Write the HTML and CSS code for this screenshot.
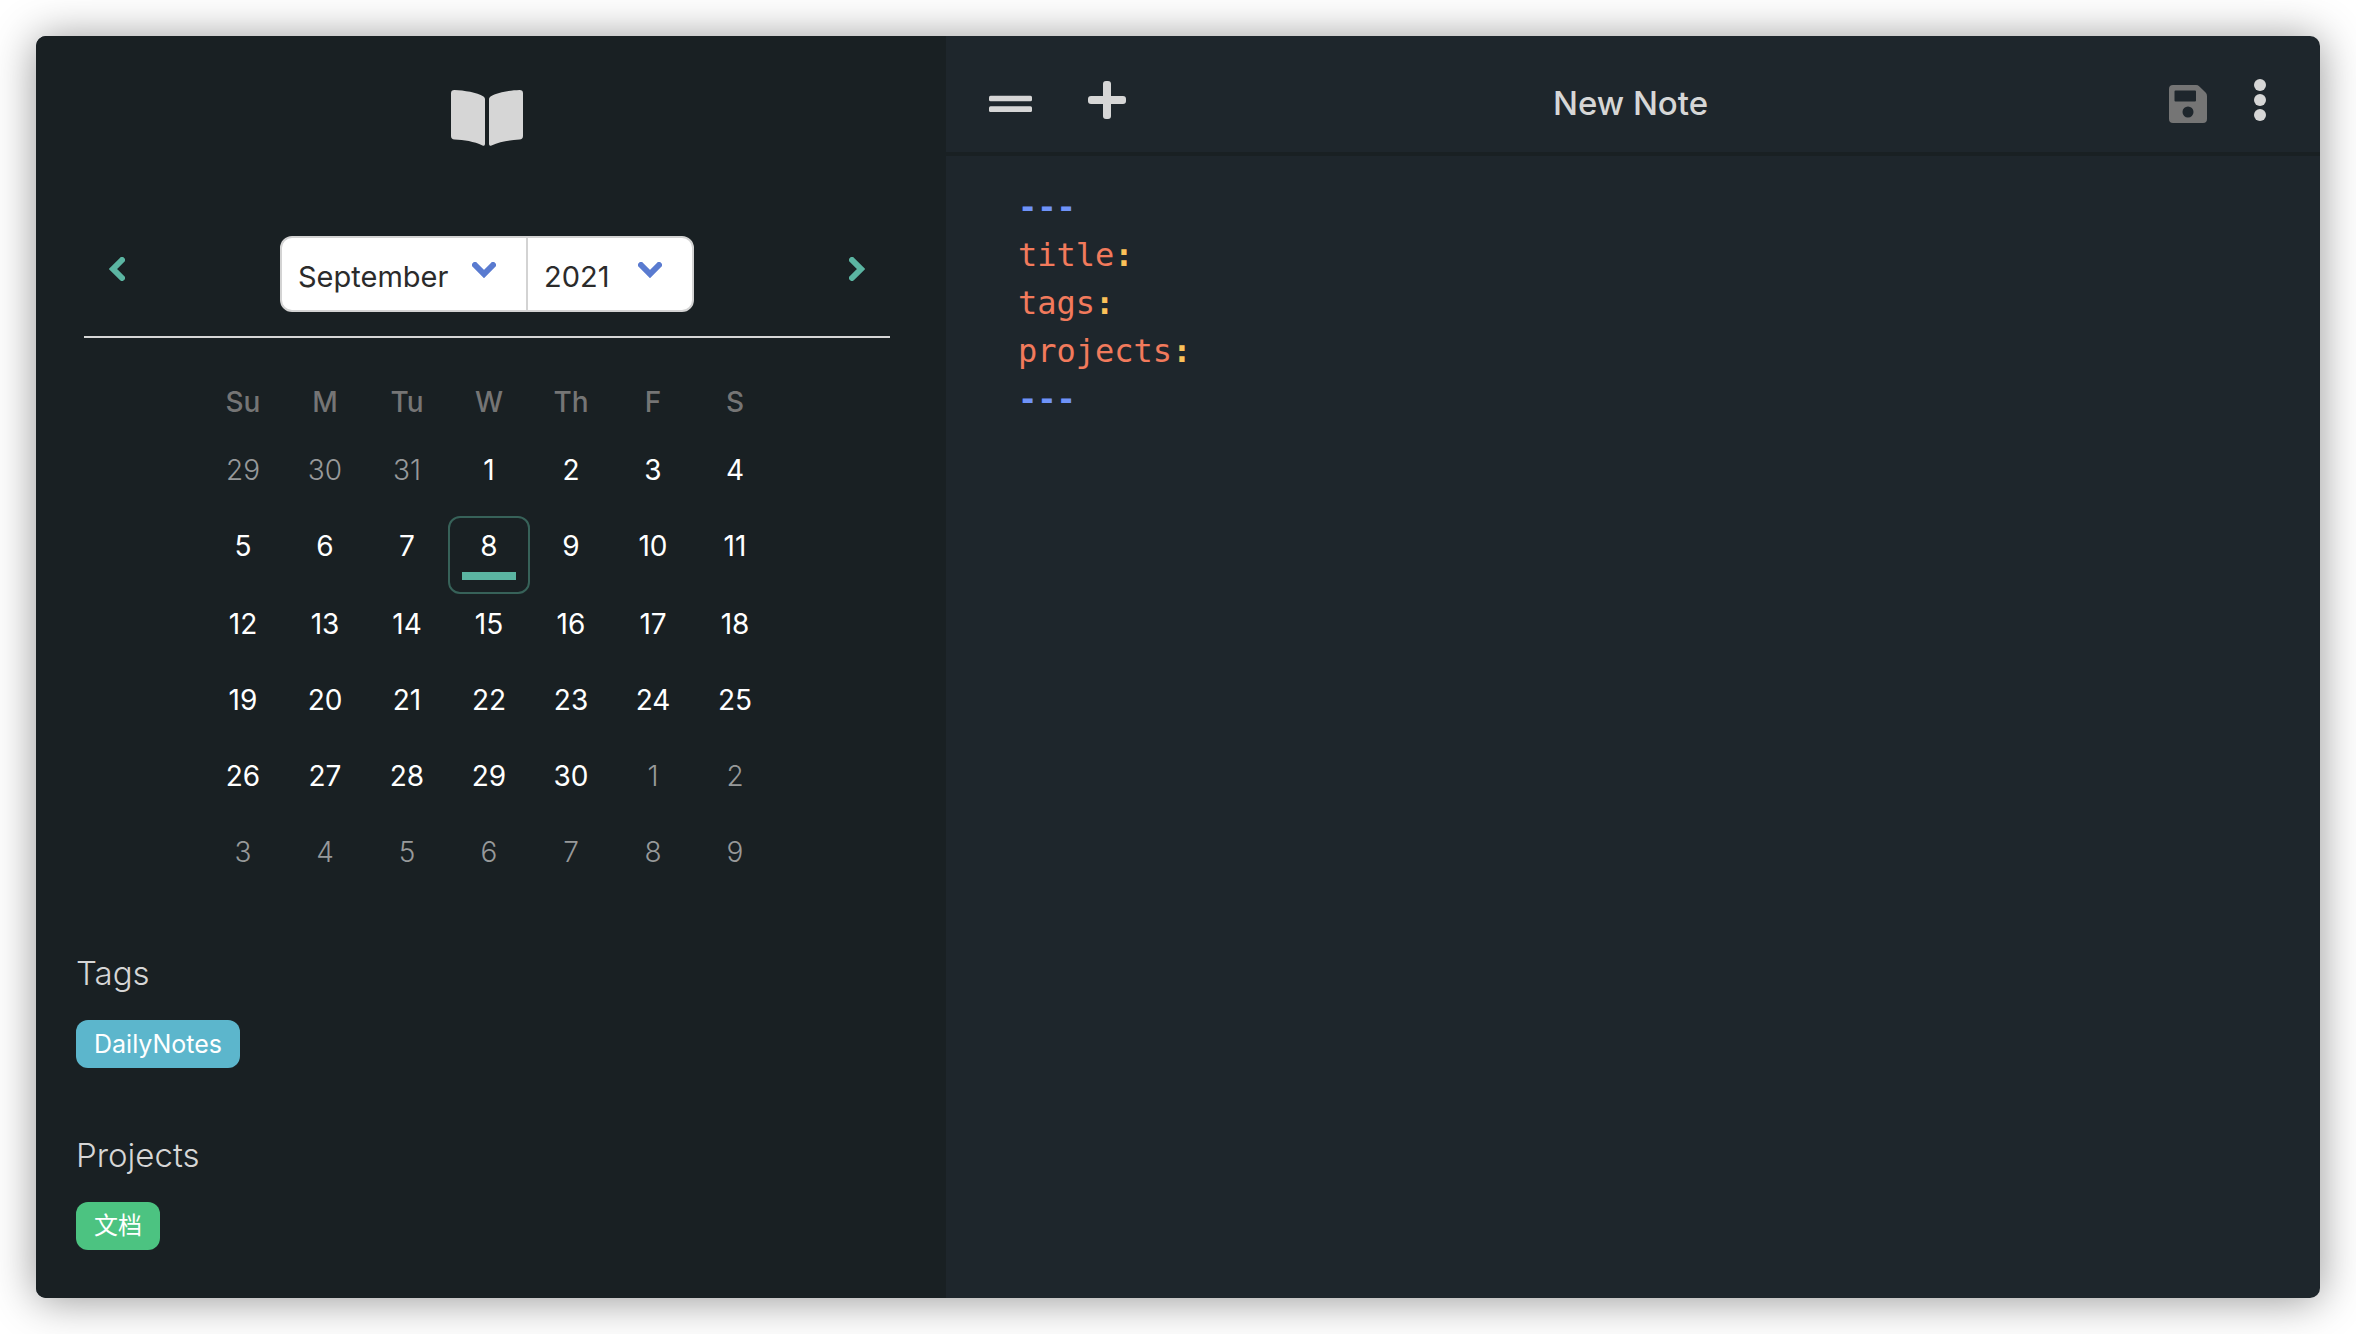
FILE: index.html
```
<!DOCTYPE html>
<html lang="en">
<head>
<meta charset="utf-8">
<meta name="viewport" content="width=device-width, initial-scale=1">
<title>New Note</title>
<link rel="stylesheet" href="styles.css">
</head>
<body>
<div class="window">
  <aside class="sidebar">
    <a class="logo" href="#" aria-label="Home">
      <svg width="72" height="56" viewBox="0 0 72 56" fill="currentColor"><path d="M3.500 0C13 .3 26 2.500 32.500 6.500Q34 7.500 34 9V54Q34 56.500 31.500 55.500C23 51.500 13 50 3.500 49.600Q0 49.400 0 46V3.300Q0 0 3.500 0ZM68.500 0C59 .3 46 2.500 39.500 6.500Q38 7.500 38 9V54Q38 56.500 40.500 55.500C49 51.500 59 50 68.500 49.600Q72 49.400 72 46V3.300Q72 0 68.500 0Z"/></svg>
    </a>

    <div class="month-nav">
      <button class="arrow" type="button" aria-label="Previous month">
        <svg width="16" height="24" viewBox="0 0 16 24"><path d="M13 3 4 12l9 9"/></svg>
      </button>
      <div class="pickers">
        <div class="picker picker-month">
          <select aria-label="Month"><option>September</option></select>
          <svg class="caret" width="24" height="16" viewBox="0 0 24 16"><path d="m3 3 9 9 9-9"/></svg>
        </div>
        <div class="picker picker-year">
          <select aria-label="Year"><option>2021</option></select>
          <svg class="caret" width="24" height="16" viewBox="0 0 24 16"><path d="m3 3 9 9 9-9"/></svg>
        </div>
      </div>
      <button class="arrow" type="button" aria-label="Next month">
        <svg width="16" height="24" viewBox="0 0 16 24"><path d="m3 3 9 9-9 9"/></svg>
      </button>
    </div>

    <table class="calendar">
      <thead>
        <tr><th>Su</th><th>M</th><th>Tu</th><th>W</th><th>Th</th><th>F</th><th>S</th></tr>
      </thead>
      <tbody>
        <tr><td><button class="day muted">29</button></td><td><button class="day muted">30</button></td><td><button class="day muted">31</button></td><td><button class="day">1</button></td><td><button class="day">2</button></td><td><button class="day">3</button></td><td><button class="day">4</button></td></tr>
        <tr><td><button class="day">5</button></td><td><button class="day">6</button></td><td><button class="day">7</button></td><td><button class="day today">8</button></td><td><button class="day">9</button></td><td><button class="day">10</button></td><td><button class="day">11</button></td></tr>
        <tr><td><button class="day">12</button></td><td><button class="day">13</button></td><td><button class="day">14</button></td><td><button class="day">15</button></td><td><button class="day">16</button></td><td><button class="day">17</button></td><td><button class="day">18</button></td></tr>
        <tr><td><button class="day">19</button></td><td><button class="day">20</button></td><td><button class="day">21</button></td><td><button class="day">22</button></td><td><button class="day">23</button></td><td><button class="day">24</button></td><td><button class="day">25</button></td></tr>
        <tr><td><button class="day">26</button></td><td><button class="day">27</button></td><td><button class="day">28</button></td><td><button class="day">29</button></td><td><button class="day">30</button></td><td><button class="day muted">1</button></td><td><button class="day muted">2</button></td></tr>
        <tr><td><button class="day muted">3</button></td><td><button class="day muted">4</button></td><td><button class="day muted">5</button></td><td><button class="day muted">6</button></td><td><button class="day muted">7</button></td><td><button class="day muted">8</button></td><td><button class="day muted">9</button></td></tr>
      </tbody>
    </table>

    <section class="group">
      <h2>Tags</h2>
      <a class="badge badge-tag" href="#">DailyNotes</a>
    </section>
    <section class="group">
      <h2>Projects</h2>
      <a class="badge badge-project" href="#" lang="zh">文档</a>
    </section>
  </aside>

  <main class="note">
    <header class="toolbar">
      <div class="tools">
        <button class="tool" type="button" aria-label="Toggle sidebar">
          <svg width="43" height="46" viewBox="0 0 43 46" fill="currentColor"><rect x="0" y="18.700" width="43" height="5.600" rx="1.500"/><rect x="0" y="29.300" width="43" height="5.600" rx="1.500"/></svg>
        </button>
        <button class="tool" type="button" aria-label="New note">
          <svg width="38" height="46" viewBox="0 0 38 46" fill="currentColor"><rect x="0" y="19" width="38" height="8" rx="3"/><rect x="15" y="4" width="8" height="38" rx="3"/></svg>
        </button>
      </div>
      <h1>New Note</h1>
      <div class="tools tools-end">
        <button class="tool tool-off" type="button" aria-label="Save">
          <svg width="38" height="38" viewBox="0 0 38 38" fill="currentColor" fill-rule="evenodd"><path d="M4 0H27Q29 0 30.400 1.400L36.600 7.600Q38 9 38 11V34Q38 38 34 38H4Q0 38 0 34V4Q0 0 4 0ZM6.500 5.500Q5.500 5.500 5.500 6.500V15.500Q5.500 16.500 6.500 16.500H26Q27 16.500 27 15.500V6.500Q27 5.500 26 5.500ZM19 21.500A5.500 5.500 0 1 0 19 32.500A5.500 5.500 0 1 0 19 21.500Z"/></svg>
        </button>
        <button class="tool" type="button" aria-label="More">
          <svg width="12" height="46" viewBox="0 0 12 46" fill="currentColor"><circle cx="6" cy="8" r="6"/><circle cx="6" cy="23" r="6"/><circle cx="6" cy="38" r="6"/></svg>
        </button>
      </div>
    </header>
    <pre class="editor" contenteditable="true" spellcheck="false"><span class="rule">---</span>
<span class="key">title</span><span class="colon">:</span>
<span class="key">tags</span><span class="colon">:</span>
<span class="key">projects</span><span class="colon">:</span>
<span class="rule">---</span></pre>
  </main>
</div>
</body>
</html>
```
FILE: styles.css
```
* { box-sizing: border-box; }

body {
  margin: 0;
  padding: 36px;
  background: #fff;
  color: #d6d6d6;
  font-family: Inter, "Noto Sans CJK SC", sans-serif;
}

button, select { font: inherit; }

button {
  padding: 0;
  border: 0;
  background: none;
  color: inherit;
  cursor: pointer;
}

svg { display: block; }

.window {
  display: grid;
  grid-template-columns: 910fr 1374fr;
  min-height: calc(100vh - 72px);
  border-radius: 10px;
  overflow: hidden;
  background: #1e262c;
  box-shadow: 0 2px 44px rgba(0, 0, 0, 0.42);
}

/* Sidebar */

.sidebar {
  padding: 54px 56px 48px 40px;
  background: #192023;
}

.logo {
  display: flex;
  justify-content: center;
  margin-left: 8px;
  color: #d6d6d6;
}

.month-nav {
  display: flex;
  justify-content: space-between;
  margin: 90px 0 0 8px;
  padding: 0 23px 24px;
  border-bottom: 2px solid #d6d6d6;
}

.arrow {
  display: flex;
  align-items: center;
  height: 66px;
  padding: 0 2px;
}

.arrow path, .caret path {
  fill: none;
  stroke: #5bb5a2;
  stroke-width: 6;
  stroke-linecap: round;
}

.pickers {
  display: flex;
  height: 76px;
  border: 2px solid #d3d3d3;
  border-radius: 12px;
  overflow: hidden;
  background: #fff;
}

.picker { position: relative; }
.picker-month { width: 246px; border-right: 2px solid #d3d3d3; }
.picker-year { width: 164px; }

.picker select {
  appearance: none;
  width: 100%;
  height: 100%;
  padding: 4px 16px 0;
  border: 0;
  background: none;
  color: #2b2b2b;
  font-size: 29px;
}

.caret {
  position: absolute;
  top: 24px;
  right: 30px;
  pointer-events: none;
}

.caret path { stroke: #5a7bd0; }

.calendar {
  width: 574px;
  margin: 38px 0 50px 126px;
  border-collapse: collapse;
  table-layout: fixed;
  font-size: 28px;
}

.calendar th {
  height: 64px;
  padding: 0 0 12px;
  color: #757575;
  font-weight: 500;
}

.calendar td { padding: 0; vertical-align: top; }

.day {
  display: flex;
  flex-direction: column;
  align-items: center;
  justify-content: flex-start;
  width: 100%;
  height: 76px;
  padding: 2px 12px 0;
  border: 2px solid transparent;
  border-radius: 12px;
  color: #fff;
  line-height: 52px;
}

.day.muted { color: #97999a; font-weight: 300; }

.day.today { height: 78px; border-color: #376259; }

.day.today::after {
  content: "";
  width: 100%;
  height: 8px;
  background: #5bb5a2;
}

.group + .group { margin-top: 62px; }

.group h2 {
  margin: 0 0 22px;
  font-size: 33px;
  font-weight: 300;
  line-height: 50px;
}

.badge {
  display: block;
  width: fit-content;
  padding: 0 18px;
  border-radius: 12px;
  color: #fff;
  font-size: 25px;
  line-height: 48px;
  text-decoration: none;
}

.badge:lang(zh) { font-size: 24px; }

.badge-tag { background: #5cb6cc; }
.badge-project { background: #4cc381; }

/* Note pane */

.toolbar {
  display: grid;
  grid-template-columns: 1fr auto 1fr;
  align-items: center;
  height: 120px;
  padding: 0 54px 0 43px;
  border-bottom: 4px solid #192023;
}

.tools {
  display: flex;
  align-items: center;
  gap: 56px;
}

.tools-end {
  justify-content: flex-end;
  gap: 47px;
}

.tool-off { margin-top: 8px; color: #757575; }

.toolbar h1 {
  margin: 0;
  padding: 18px 0 0 6px;
  font-size: 33px;
  font-weight: 500;
  line-height: 48px;
}

.toolbar .tools { padding-top: 12px; }

.editor {
  margin: 0;
  padding: 27px 72px;
  outline: 0;
  font: 32px/48px "DejaVu Sans Mono", monospace;
  white-space: pre-wrap;
}

.rule { color: #6f93f8; font-weight: 700; }
.key { color: #f27a5c; }
.colon { color: #fbc159; font-weight: 700; }
```
